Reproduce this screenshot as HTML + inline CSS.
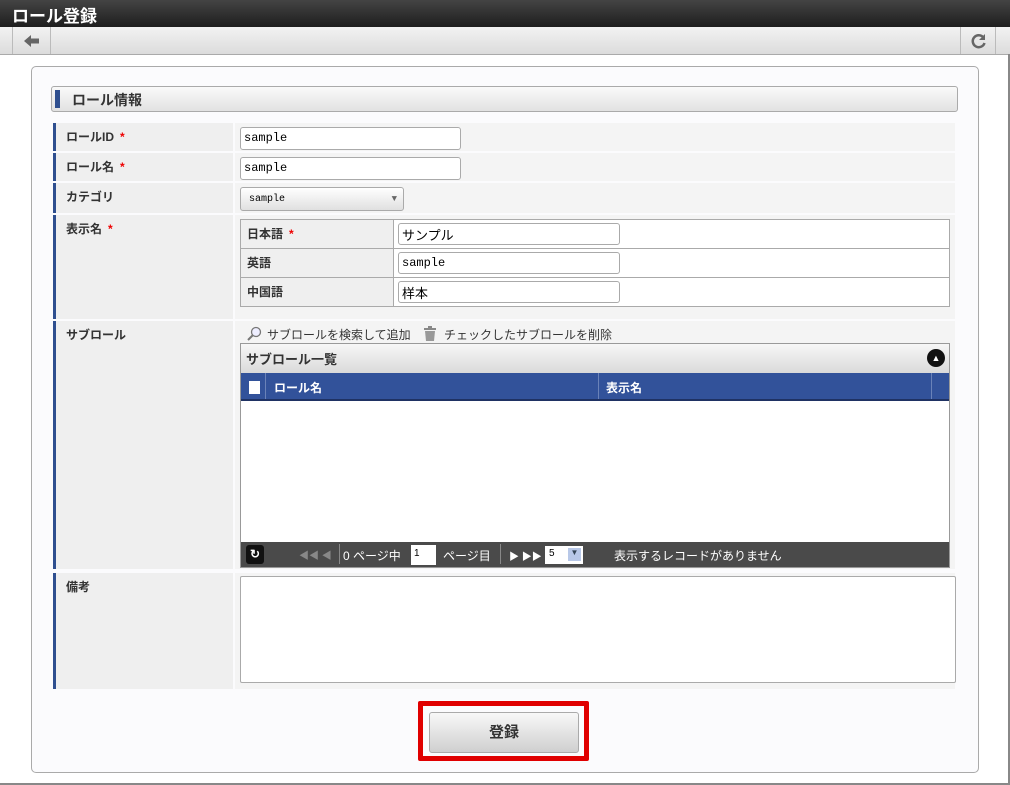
<!DOCTYPE html>
<html><head><meta charset="utf-8"><style>
*{box-sizing:border-box;margin:0;padding:0}
body{width:1010px;height:785px;position:relative;background:#fff;font-family:"Liberation Sans","Noto Sans CJK JP",sans-serif;font-size:12px;color:#333;overflow:hidden}
.a{position:absolute}
.lbl{position:absolute;left:53px;width:180px;background:#efefef;border-left:3px solid #2f4f8f;font-weight:bold;padding:5px 0 0 10px;font-size:12px;color:#333}
.val{position:absolute;left:235px;width:720px;background:#f4f4f4}
.in{position:absolute;background:#fff;border:1px solid #aaa;border-radius:3px;font-family:"Liberation Mono",monospace;font-size:12px;padding:3px 3px;color:#000}
.req{color:#e00;margin-left:6px}
</style></head><body>
<div class="a" style="left:0;top:0;width:1010px;height:27px;background:linear-gradient(#444,#1e1e1e);color:#fff;font-weight:bold;font-size:17px;padding:2px 0 0 12px">ロール登録</div>
<div class="a" style="left:0;top:27px;width:1010px;height:28px;background:linear-gradient(#f2f2f2,#dcdcdc);border-bottom:1px solid #aaa"></div>
<div class="a" style="left:12px;top:27px;width:39px;height:27px;border-left:1px solid #bbb;border-right:1px solid #bbb">
<svg width="39" height="27" style="position:absolute;left:0;top:0"><path d="M11 14 L18 8 L18 11.5 L26 11.5 L26 16.5 L18 16.5 L18 20 Z" fill="#666"/></svg></div>
<div class="a" style="left:960px;top:27px;width:36px;height:27px;border-left:1px solid #bbb;border-right:1px solid #bbb">
<svg width="36" height="27" style="position:absolute;left:0;top:0"><path d="M22.5 10.5 A6 6 0 1 0 23.5 16" fill="none" stroke="#666" stroke-width="2.5"/><path d="M24 7 L24 13 L18 13 Z" fill="#666"/></svg></div>
<div class="a" style="left:1008px;top:54px;width:2px;height:731px;background:#888"></div>
<div class="a" style="left:0;top:783px;width:1010px;height:2px;background:#888"></div>
<div class="a" style="left:31px;top:66px;width:948px;height:707px;border:1px solid #aaa;border-radius:5px;background:#fbfbfd"></div>
<div class="a" style="left:51px;top:86px;width:907px;height:26px;border:1px solid #aaa;border-radius:3px;background:linear-gradient(#fafafa,#e2e2e2)"></div>
<div class="a" style="left:55px;top:90px;width:5px;height:18px;background:#2f4f8f"></div>
<div class="a" style="left:72px;top:90px;font-weight:bold;font-size:14px;color:#333">ロール情報</div>

<div class="lbl" style="top:123px;height:28px">ロールID<span class="req">*</span></div><div class="val" style="top:123px;height:28px"></div>
<div class="in" style="left:240px;top:127px;width:221px;height:23px">sample</div>
<div class="lbl" style="top:153px;height:28px">ロール名<span class="req">*</span></div><div class="val" style="top:153px;height:28px"></div>
<div class="in" style="left:240px;top:157px;width:221px;height:23px">sample</div>
<div class="lbl" style="top:183px;height:30px">カテゴリ</div><div class="val" style="top:183px;height:30px"></div>
<div class="in" style="left:240px;top:187px;width:164px;height:24px;background:linear-gradient(#fff,#e0e0e0);font-size:10px;padding:6px 8px">sample<span style="position:absolute;right:6px;top:6px;color:#666;font-size:9px">▼</span></div>
<div class="lbl" style="top:215px;height:104px">表示名<span class="req">*</span></div><div class="val" style="top:215px;height:104px"></div>
<div class="a" style="left:240px;top:219px;width:710px;height:88px;border:1px solid #aaa;background:#fff"></div>
<div class="a" style="left:241px;top:220px;width:153px;height:86px;background:#efefef;border-right:1px solid #aaa"></div>
<div class="a" style="left:241px;top:248px;width:708px;height:1px;background:#aaa"></div>
<div class="a" style="left:241px;top:277px;width:708px;height:1px;background:#aaa"></div>
<div class="a" style="left:247px;top:225px;font-weight:bold">日本語<span class="req">*</span></div>
<div class="a" style="left:247px;top:254px;font-weight:bold">英語</div>
<div class="a" style="left:247px;top:283px;font-weight:bold">中国語</div>
<div class="in" style="left:398px;top:223px;width:222px;height:22px;font-family:'Liberation Sans','Noto Sans CJK JP',sans-serif;font-size:13px;padding:1px 3px">サンプル</div>
<div class="in" style="left:398px;top:252px;width:222px;height:22px">sample</div>
<div class="in" style="left:398px;top:281px;width:222px;height:22px;font-family:'Liberation Sans','Noto Sans CJK JP',sans-serif;font-size:13px;padding:1px 3px">样本</div>

<div class="lbl" style="top:321px;height:248px">サブロール</div><div class="val" style="top:321px;height:248px"></div>
<svg class="a" style="left:246px;top:326px" width="16" height="16"><circle cx="10" cy="6" r="4.5" fill="#eef" stroke="#777" stroke-width="1.3"/><path d="M7 9 L2 14" stroke="#777" stroke-width="2"/></svg>
<div class="a" style="left:267px;top:326px;color:#333">サブロールを検索して追加</div>
<svg class="a" style="left:423px;top:326px" width="14" height="16"><rect x="1" y="2" width="12" height="2" fill="#888"/><rect x="5" y="0" width="4" height="2" fill="#888"/><path d="M2 5 H12 L11 15 H3 Z" fill="#999"/></svg>
<div class="a" style="left:444px;top:326px;color:#333">チェックしたサブロールを削除</div>
<div class="a" style="left:240px;top:343px;width:710px;height:225px;border:1px solid #999;background:#fff;overflow:hidden">
 <div style="height:29px;background:linear-gradient(#f7f7f7,#dadada);font-weight:bold;font-size:13px;padding:5px 0 0 5px;position:relative">サブロール一覧<span style="position:absolute;right:4px;top:5px;width:18px;height:18px;border-radius:50%;background:#111;color:#fff;font-size:9px;text-align:center;line-height:18px">▲</span></div>
 <div style="height:28px;background:#32529a;border-bottom:2px solid #1f3263;position:relative;color:#fff;font-weight:bold">
  <span style="position:absolute;left:8px;top:8px;width:11px;height:13px;background:#fff"></span>
  <span style="position:absolute;left:24px;top:0;height:26px;border-left:1px solid #6a82b8"></span>
  <span style="position:absolute;left:33px;top:6px">ロール名</span>
  <span style="position:absolute;left:357px;top:0;height:26px;border-left:1px solid #6a82b8"></span>
  <span style="position:absolute;left:365px;top:6px">表示名</span>
  <span style="position:absolute;left:690px;top:0;height:26px;border-left:1px solid #6a82b8"></span>
 </div>
 <div style="position:absolute;left:0;top:198px;width:710px;height:26px;background:#4a4a4a;color:#fff;font-size:12px">
  <span style="position:absolute;left:5px;top:3px;width:18px;height:19px;background:#111;border-radius:3px;text-align:center;font-weight:bold;line-height:19px">↻</span>
  <span style="position:absolute;left:58px;top:5px;color:#888;font-size:10px">◀◀ ◀</span>
  <span style="position:absolute;left:98px;top:2px;height:20px;border-left:1px solid #888"></span>
  <span style="position:absolute;left:102px;top:5px">0 ページ中</span>
  <span style="position:absolute;left:170px;top:3px;width:25px;height:20px;background:#fff;color:#000;font-size:10px;padding:3px">1</span>
  <span style="position:absolute;left:202px;top:5px">ページ目</span>
  <span style="position:absolute;left:259px;top:2px;height:20px;border-left:1px solid #888"></span>
  <span style="position:absolute;left:268px;top:6px;font-size:10px">▶ ▶▶</span>
  <span style="position:absolute;left:304px;top:4px;width:38px;height:18px;background:#fff;color:#000;font-size:10px;padding:2px 4px">5<span style="position:absolute;right:2px;top:2px;width:13px;height:13px;background:#b8c8e8;color:#345;font-size:8px;text-align:center">▼</span></span>
  <span style="position:absolute;left:373px;top:5px">表示するレコードがありません</span>
 </div>
</div>

<div class="lbl" style="top:573px;height:116px">備考</div><div class="val" style="top:573px;height:116px"></div>
<div class="a" style="left:240px;top:576px;width:716px;height:107px;border:1px solid #aaa;border-radius:2px;background:#fff"></div>

<div class="a" style="left:418px;top:701px;width:171px;height:60px;border:5px solid #e00000;border-radius:2px"></div>
<div class="a" style="left:429px;top:712px;width:150px;height:41px;border:1px solid #aaa;border-radius:3px;background:linear-gradient(#f8f8f8,#cfcfcf);text-align:center;line-height:39px;font-size:15px;font-weight:bold;color:#333">登録</div>
</body></html>
